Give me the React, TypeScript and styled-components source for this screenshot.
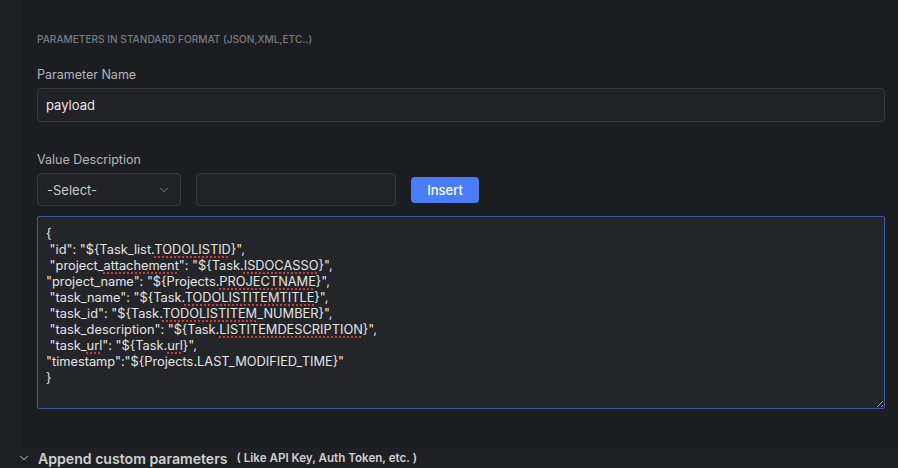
import React from "react";
import styled, { createGlobalStyle } from "styled-components";
import { ChevronDown } from "lucide-react";

const Global = createGlobalStyle`
  html, body { margin: 0; padding: 0; background: #1f2023; }
  body { font-family: Inter, "Noto Sans", sans-serif; -webkit-font-smoothing: antialiased; }
  * { box-sizing: border-box; }
`;

const Page = styled.div`
  width: 898px;
  height: 468px;
  overflow: hidden;
  display: flex;
  flex-direction: column;
  background: #1f2023;
`;

const Panel = styled.section`
  margin-left: 22px;
  background: #1c1d20;
  padding: 33px 13px 39px 15px;
  display: flex;
  flex-direction: column;
`;

const Heading = styled.div`
  font-size: 10.1px;
  line-height: 12px;
  font-weight: 500;
  color: #797b7f;
  text-transform: uppercase;
  letter-spacing: 0;
`;

const Label = styled.div<{ $top: number }>`
  margin-top: ${(p) => p.$top}px;
  margin-bottom: 5px;
  font-size: 12.5px;
  line-height: 16px;
  color: #b5b6b9;
`;

const TextInput = styled.div<{ $width?: number }>`
  height: ${(p) => (p.$width ? 33 : 34)}px;
  width: ${(p) => (p.$width ? `${p.$width}px` : "100%")};
  background: #212225;
  border: 1px solid #38393d;
  border-radius: 4px;
  display: flex;
  align-items: center;
  padding: 0 8px;
  font-size: 13px;
  color: #e6e6e8;
`;

const Row = styled.div`
  display: flex;
  align-items: center;
  gap: 15px;
`;

const Select = styled.div`
  width: 144px;
  height: 33px;
  background: #212225;
  border: 1px solid #38393d;
  border-radius: 4px;
  display: flex;
  align-items: center;
  justify-content: space-between;
  padding: 0 9px 0 9px;
  font-size: 13px;
  color: #c9cacc;
  svg { color: #8d8e92; }
`;

const Button = styled.button`
  width: 68px;
  height: 26px;
  border: none;
  border-radius: 4px;
  background: #4a7cf6;
  color: #ffffff;
  font-family: Inter, sans-serif;
  font-size: 13px;
  font-weight: 500;
  padding: 0;
`;

const Area = styled.div`
  margin-top: 10px;
  height: 193px;
  background: #242528;
  border: 1px solid #3a5ba3;
  border-radius: 2px;
  padding: 9px 8px;
  font-family: Inter, "Noto Sans", sans-serif;
  font-size: 12.8px;
  line-height: 16px;
  color: #e4e4e6;
  white-space: pre;
  overflow: auto;
  resize: vertical;
`;

const Typo = styled.span`
  text-decoration: underline dotted #d23a3a;
  text-decoration-thickness: 2px;
  text-underline-offset: 2px;
`;

const Footer = styled.div`
  display: flex;
  align-items: center;
  height: 20px;
  padding-left: 17px;
  color: #cfd0d2;
  svg { color: #b0b1b4; margin-right: 7px; }
`;

const FooterTitle = styled.span`
  font-size: 14.1px;
  font-weight: 600;
`;

const FooterHint = styled.span`
  margin-left: 9px;
  font-size: 11.6px;
  font-weight: 600;
`;

export default function App() {
  return (
    <Page>
      <Global />
      <Panel>
        <Heading>Parameters in standard format (JSON,XML,ETC..)</Heading>
        <Label $top={22}>Parameter Name</Label>
        <TextInput>payload</TextInput>
        <Label $top={30}>Value Description</Label>
        <Row>
          <Select>
            <span>-Select-</span>
            <ChevronDown size={14} strokeWidth={1.5} />
          </Select>
          <TextInput $width={200} />
          <Button>Insert</Button>
        </Row>
        <Area>
          {"{\n"}
          {' "id": "${Task_list.'}<Typo>TODOLISTID</Typo>{'}",\n'}
          {' "project_'}<Typo>attachement</Typo>{'": "${Task.'}<Typo>ISDOCASSO</Typo>{'}",\n'}
          {'"project_name": "${Projects.'}<Typo>PROJECTNAME</Typo>{'}",\n'}
          {' "task_name": "${Task.'}<Typo>TODOLISTITEMTITLE</Typo>{'}",\n'}
          {' "task_id": "${Task.'}<Typo>TODOLISTITEM</Typo>{'_NUMBER}",\n'}
          {' "task_description": "${Task.'}<Typo>LISTITEMDESCRIPTION</Typo>{'}",\n'}
          {' "task_'}<Typo>url</Typo>{'": "${Task.'}<Typo>url</Typo>{'}",\n'}
          {'"timestamp":"${Projects.LAST_MODIFIED_TIME}"\n'}
          {"}"}
        </Area>
      </Panel>
      <Footer>
        <ChevronDown size={14} strokeWidth={1.8} />
        <FooterTitle>Append custom parameters</FooterTitle>
        <FooterHint>( Like API Key, Auth Token, etc. )</FooterHint>
      </Footer>
    </Page>
  );
}
